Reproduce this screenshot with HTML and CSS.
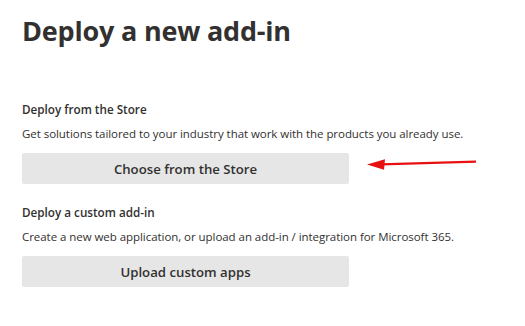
FILE: index.html
```html
<!DOCTYPE html>
<html lang="en">
<head>
  <meta charset="UTF-8">
  <title>Deploy a new add-in</title>
  <link rel="stylesheet" href="styles.css">
</head>
<body>
  <div class="panel">
    <h1>Deploy a new add-in</h1>

    <section class="option">
      <h2>Deploy from the Store</h2>
      <p>Get solutions tailored to your industry that work with the products you already use.</p>
      <div class="action-row">
        <button type="button">Choose from the Store</button>
        <!-- annotation arrow -->
        <svg class="arrow" width="112" height="16" viewBox="0 0 112 16">
          <line x1="109" y1="4.6" x2="14" y2="7.4" stroke="#e81010" stroke-width="2.4"/>
          <polygon points="0,7.4 18,2.2 17,12.8" fill="#e81010"/>
        </svg>
      </div>
    </section>

    <section class="option">
      <h2>Deploy a custom add-in</h2>
      <p>Create a new web application, or upload an add-in / integration for Microsoft 365.</p>
      <div class="action-row">
        <button type="button">Upload custom apps</button>
      </div>
    </section>
  </div>
</body>
</html>
```

FILE: styles.css
```css
body {
  margin: 0;
  padding: 0;
  background-color: #fff;
  font-family: 'Open Sans', 'Noto Sans', sans-serif;
  color: #323130;
}

.panel {
  padding: 12px 0 0 22px;
}

h1 {
  font-size: 27px;
  font-weight: 700;
  margin: 0 0 52px 0;
  letter-spacing: -0.2px;
}

.option {
  margin-bottom: 20px;
}

h2 {
  font-size: 11.7px;
  font-weight: 600;
  margin: 0 0 9px 0;
}

p {
  font-size: 11.5px;
  margin: 0 0 12px 0;
  letter-spacing: -0.05px;
}

.action-row {
  position: relative;
}

button {
  width: 327px;
  height: 31px;
  background-color: #e6e6e6;
  border: none;
  border-radius: 2px;
  font-family: inherit;
  font-size: 13.2px;
  font-weight: 600;
  color: #323130;
  cursor: pointer;
}

.arrow {
  position: absolute;
  left: 345px;
  top: 4px;
}
```
